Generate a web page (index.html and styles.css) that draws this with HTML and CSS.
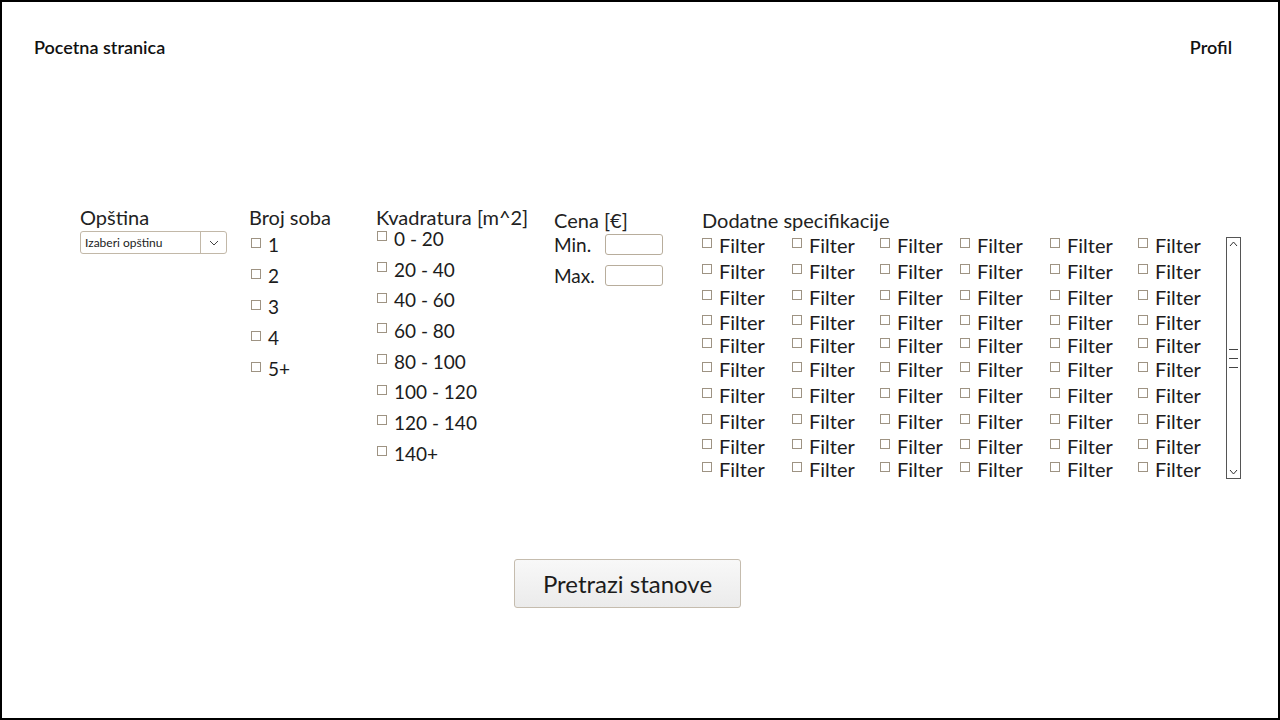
FILE: index.html
```html
<!DOCTYPE html>
<html lang="sr">
<head>
<meta charset="utf-8">
<title>Pocetna stranica</title>
<link rel="stylesheet" href="styles.css">
</head>
<body>
<div class="page">
  <header class="header">
    <a class="nav-link">Pocetna stranica</a>
    <a class="nav-link">Profil</a>
  </header>

  <section class="filters">
    <div class="col col-opstina">
      <div class="col-title">Opština</div>
      <div class="select">
        <span class="select-text">Izaberi opštinu</span>
        <span class="select-btn">
          <svg width="10" height="6" viewBox="0 0 10 6"><path d="M1 1 L5 5 L9 1" fill="none" stroke="#444" stroke-width="1"/></svg>
        </span>
      </div>
    </div>

    <div class="col col-sobe">
      <div class="col-title">Broj soba</div>
      <ul class="list list-sobe">
        <li class="item"><span class="box"></span>1</li>
        <li class="item"><span class="box"></span>2</li>
        <li class="item"><span class="box"></span>3</li>
        <li class="item"><span class="box"></span>4</li>
        <li class="item"><span class="box"></span>5+</li>
      </ul>
    </div>

    <div class="col col-kv">
      <div class="col-title">Kvadratura [m^2]</div>
      <ul class="list list-kv">
        <li class="item"><span class="box"></span>0 - 20</li>
        <li class="item"><span class="box"></span>20 - 40</li>
        <li class="item"><span class="box"></span>40 - 60</li>
        <li class="item"><span class="box"></span>60 - 80</li>
        <li class="item"><span class="box"></span>80 - 100</li>
        <li class="item"><span class="box"></span>100 - 120</li>
        <li class="item"><span class="box"></span>120 - 140</li>
        <li class="item"><span class="box"></span>140+</li>
      </ul>
    </div>

    <div class="col col-cena">
      <div class="col-title">Cena [€]</div>
      <div class="price-rows">
        <div class="price-row"><span class="price-label">Min.</span><span class="price-input"></span></div>
        <div class="price-row"><span class="price-label">Max.</span><span class="price-input"></span></div>
      </div>
    </div>

    <div class="col col-dod">
      <div class="col-title">Dodatne specifikacije</div>
      <div class="dod-body">
        <div class="filter-grid" id="grid"></div>
        <div class="scrollbar">
          <svg class="sb-up" width="9" height="6" viewBox="0 0 9 6"><path d="M1 5 L4.5 1 L8 5" fill="none" stroke="#333" stroke-width="1"/></svg>
          <div class="sb-grip"><span></span><span></span><span></span></div>
          <svg class="sb-down" width="9" height="6" viewBox="0 0 9 6"><path d="M1 1 L4.5 5 L8 1" fill="none" stroke="#333" stroke-width="1"/></svg>
        </div>
      </div>
    </div>
  </section>

  <div class="actions">
    <button class="search-btn">Pretrazi stanove</button>
  </div>
</div>
<script>
  var g = document.getElementById('grid');
  var html = '';
  for (var i = 0; i < 60; i++) {
    html += '<div class="item fitem"><span class="box"></span>Filter</div>';
  }
  g.innerHTML = html;
</script>
</body>
</html>
```

FILE: styles.css
```css
* { box-sizing: border-box; }

body {
  margin: 0;
  background: #fff;
  font-family: Lato, "Open Sans", Arial, sans-serif;
  color: #1c1c1c;
}

.page {
  width: 1280px;
  height: 720px;
  border: 2px solid #000;
  background: #fff;
}

.header {
  display: flex;
  justify-content: space-between;
  padding: 34px 46px 0 32px;
  font-size: 18px;
  line-height: 22px;
  font-weight: 600;
}

.nav-link { color: #111; text-decoration: none; }

.filters {
  display: flex;
  margin-top: 147px;
  padding-left: 78px;
  height: 280px;
}

.col-title {
  font-size: 20px;
  line-height: 24px;
  color: #222;
  white-space: nowrap;
}

.col-opstina { width: 169px; }
.col-sobe { width: 127px; }
.col-kv { width: 178px; }
.col-cena { width: 148px; padding-top: 3px; }
.col-dod { padding-top: 3px; }

.select {
  margin-top: 2px;
  width: 147px;
  height: 23px;
  border: 1px solid #c2b8a8;
  border-radius: 3px;
  display: flex;
  align-items: center;
  background: #fff;
}

.select-text {
  flex: 1;
  font-size: 12px;
  padding-left: 4px;
  color: #222;
}

.select-btn {
  width: 26px;
  height: 100%;
  border-left: 1px solid #c2b8a8;
  display: flex;
  align-items: center;
  justify-content: center;
}

.list {
  list-style: none;
  margin: 0;
  padding: 0;
}

.item {
  display: flex;
  align-items: center;
  font-size: 19px;
  color: #1c1c1c;
  white-space: nowrap;
}

.list .item { height: 31px; }
.list-sobe { padding-left: 2px; }
.list-kv { margin-top: -6px; padding-left: 1px; }
.list-kv .item { height: 30.7px; }

.box {
  display: inline-block;
  width: 10px;
  height: 10px;
  border: 1px solid #9e9383;
  background: #fff;
  margin-right: 7px;
  margin-bottom: 4px;
  flex: none;
}

.price-rows { margin-top: -3px; }

.price-row {
  display: flex;
  align-items: center;
  height: 31px;
  font-size: 19px;
}

.price-label { width: 51px; }

.price-input {
  width: 58px;
  height: 21px;
  border: 1px solid #b8ad9c;
  border-radius: 3px;
  background: #fff;
}

.dod-body {
  display: flex;
  align-items: flex-start;
}

.filter-grid {
  display: grid;
  grid-template-columns: 90px 88px 80px 90px 88px 88px;
  grid-template-rows: 26px 26px 26px 24px 22px 26px 26px 26px 24px 22px;
}

.fitem { font-size: 20px; }

.scrollbar {
  margin-top: 5px;
  width: 15px;
  height: 242px;
  border: 1px solid #555;
  display: flex;
  flex-direction: column;
  align-items: center;
  justify-content: space-between;
  padding: 3px 0 3px;
  background: #fff;
}

.sb-grip {
  display: flex;
  flex-direction: column;
  gap: 8px;
}

.sb-grip span {
  display: block;
  width: 9px;
  height: 1px;
  background: #444;
}

.actions {
  padding-left: 512px;
  margin-top: 74px;
}

.search-btn {
  width: 227px;
  height: 49px;
  font-family: Lato, "Open Sans", Arial, sans-serif;
  font-size: 24px;
  color: #1c1c1c;
  border: 1px solid #c5bcae;
  border-radius: 3px;
  background: linear-gradient(#f8f8f8, #ebebeb);
  padding: 0;
}
```
